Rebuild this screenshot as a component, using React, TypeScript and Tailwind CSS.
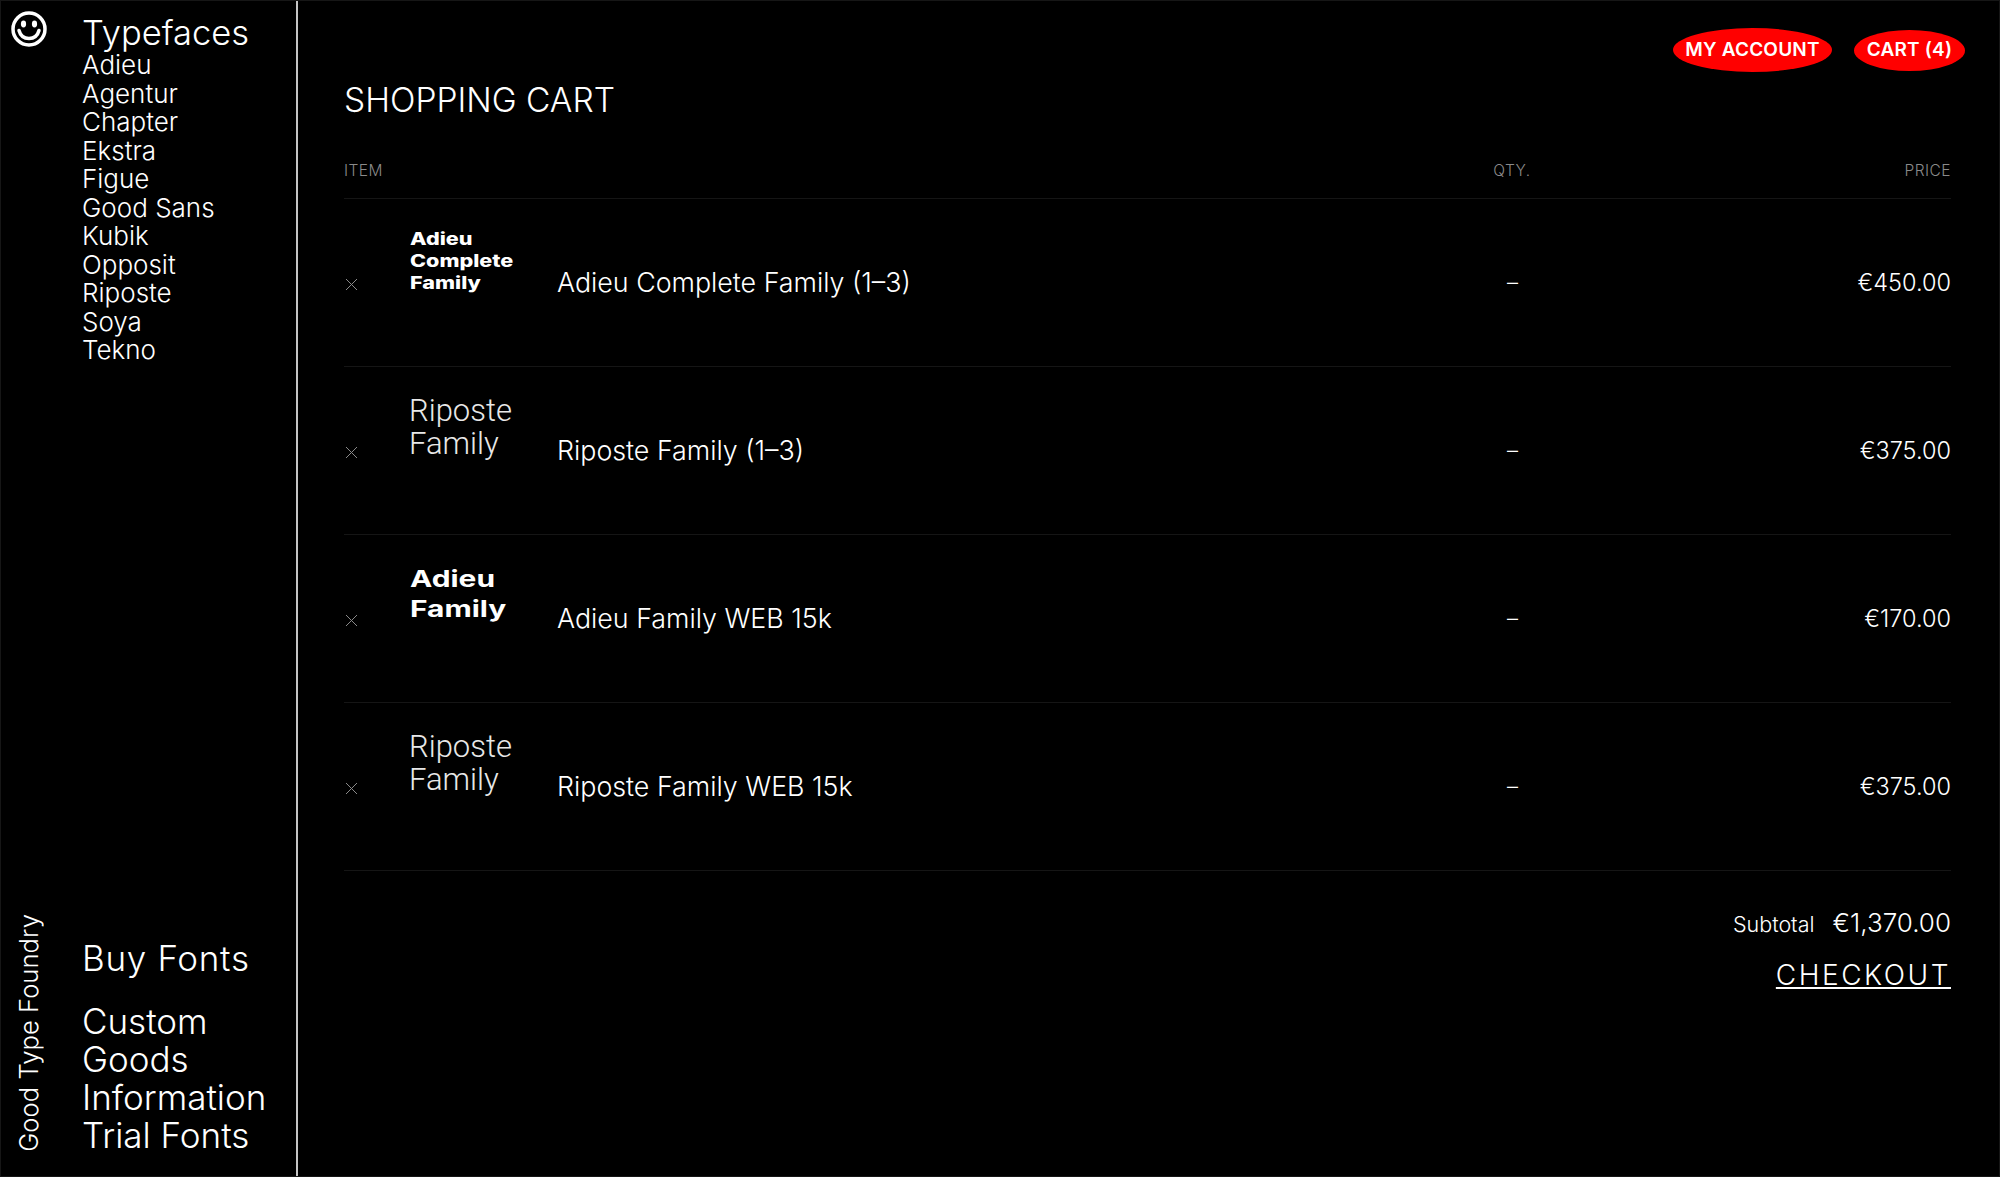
const typefaces = ['Adieu', 'Agentur', 'Chapter', 'Ekstra', 'Figue', 'Good Sans', 'Kubik', 'Opposit', 'Riposte', 'Soya', 'Tekno'];
const pages = ['Custom', 'Goods', 'Information', 'Trial Fonts'];

const items = [
  { thumb: 'Adieu\nComplete\nFamily', kind: 'small', name: 'Adieu Complete Family (1–3)', price: '€450.00' },
  { thumb: 'Riposte\nFamily', kind: 'thin', name: 'Riposte Family (1–3)', price: '€375.00' },
  { thumb: 'Adieu\nFamily', kind: 'big', name: 'Adieu Family WEB 15k', price: '€170.00' },
  { thumb: 'Riposte\nFamily', kind: 'thin', name: 'Riposte Family WEB 15k', price: '€375.00' },
];

function Smiley() {
  return (
    <svg width="36" height="36" viewBox="0 0 36 36" fill="none" stroke="white" strokeWidth="3.500">
      <circle cx="18" cy="18" r="16" />
      <ellipse cx="12.500" cy="13" rx="2.600" ry="3.400" fill="white" stroke="none" />
      <ellipse cx="23.500" cy="13" rx="2.600" ry="3.400" fill="white" stroke="none" />
      <path d="M8 19.500c1.500 5.500 5 8 10 8s8.500-2.500 10-8" strokeLinecap="round" />
    </svg>
  );
}

function Thumb({ text, kind }: { text: string; kind: string }) {
  if (kind === 'thin') {
    return <div className="self-start whitespace-pre-line pt-[27px] font-['Roboto',sans-serif] font-light text-[31px] leading-[33px] text-[#e8e8e8]">{text}</div>;
  }
  if (kind === 'big') {
    return <div className="ml-[1px] self-start whitespace-pre-line pt-[29px] font-['Inter',sans-serif] font-bold text-[23px] leading-[30px] origin-left scale-x-[1.3]">{text}</div>;
  }
  return <div className="ml-[1px] self-start whitespace-pre-line pt-[29px] font-['Inter',sans-serif] font-extrabold text-[17px] leading-[22px] origin-left scale-x-[1.27]">{text}</div>;
}

export default function App() {
  return (
    <div className="flex h-[1177px] overflow-hidden bg-black text-white font-['Inter',sans-serif] font-light border border-[#161616]">
      {/* Sidebar */}
      <aside className="flex w-[297px] shrink-0 flex-col justify-between border-r-2 border-[#c4c4c4] pb-[22px]">
        <div className="flex">
          <div className="w-[81px] shrink-0 pl-[10px] pt-[10px]"><Smiley /></div>
          <div className="pt-[13px]">
            <div className="text-[34.500px] leading-[37px]">Typefaces</div>
            <ul className="text-[26px] leading-[28.500px]">
              {typefaces.map((t) => <li key={t}>{t}</li>)}
            </ul>
          </div>
        </div>
        <div className="flex items-end">
          <div className="mb-[2px] w-[81px] shrink-0 pl-[13px]">
            <div className="rotate-180 text-[25.700px] leading-[30px] [writing-mode:vertical-rl]">Good Type Foundry</div>
          </div>
          <div className="text-[35px] leading-[38px]">
            <div className="mb-[25px] tracking-[0.02em]">Buy Fonts</div>
            {pages.map((p) => <div key={p}>{p}</div>)}
          </div>
        </div>
      </aside>

      {/* Cart */}
      <main className="flex-1 pl-[46px] pr-[48px]">
        <div className="mr-[-14px] flex justify-end gap-[22px] pt-[27px] font-['Inter',sans-serif] text-[19px] font-semibold tracking-[0.01em]">
          <div className="flex h-[44px] w-[159px] items-center justify-center rounded-[50%] bg-[#ff0000]">MY ACCOUNT</div>
          <div className="mt-[2px] flex h-[41px] w-[111px] items-center justify-center rounded-[50%] bg-[#ff0000]">CART (4)</div>
        </div>
        <h1 className="mt-[8px] text-[33.500px] leading-[40px]">SHOPPING CART</h1>

        <div className="mt-[42px] flex h-[37px] items-start border-b border-[#151515] text-[15.500px] leading-[18px] tracking-[0.03em] text-[#8a8a8a]">
          <div className="flex-1">ITEM</div>
          <div className="w-[40px] text-center">QTY.</div>
          <div className="w-[419px] text-right">PRICE</div>
        </div>

        {items.map((item) => (
          <div key={item.name} className="flex h-[168px] items-center border-b border-[#151515]">
            <div className="w-[65px] shrink-0 pl-[1px] pt-[3px] text-[#8a8a8a]">
              <svg width="13" height="13" viewBox="0 0 13 13" stroke="currentColor" strokeWidth="1"><path d="M1 1l11 11M12 1L1 12" /></svg>
            </div>
            <div className="flex w-[148px] shrink-0 self-stretch"><Thumb text={item.thumb} kind={item.kind} /></div>
            <div className="flex-1 text-[26.800px]">{item.name}</div>
            <div className="w-[40px] pl-[1px] text-center text-[22px]">–</div>
            <div className="w-[419px] text-right text-[23.500px]">{item.price}</div>
          </div>
        ))}

        <div className="mt-[32px] flex items-baseline justify-end gap-[18px]">
          <span className="text-[21.500px]">Subtotal</span>
          <span className="text-[26px]">€1,370.00</span>
        </div>
        <div className="mt-[17px] text-right">
          <a className="text-[28px] leading-[32px] tracking-[0.09em] underline underline-offset-2">CHECKOUT</a>
        </div>
      </main>
    </div>
  );
}
